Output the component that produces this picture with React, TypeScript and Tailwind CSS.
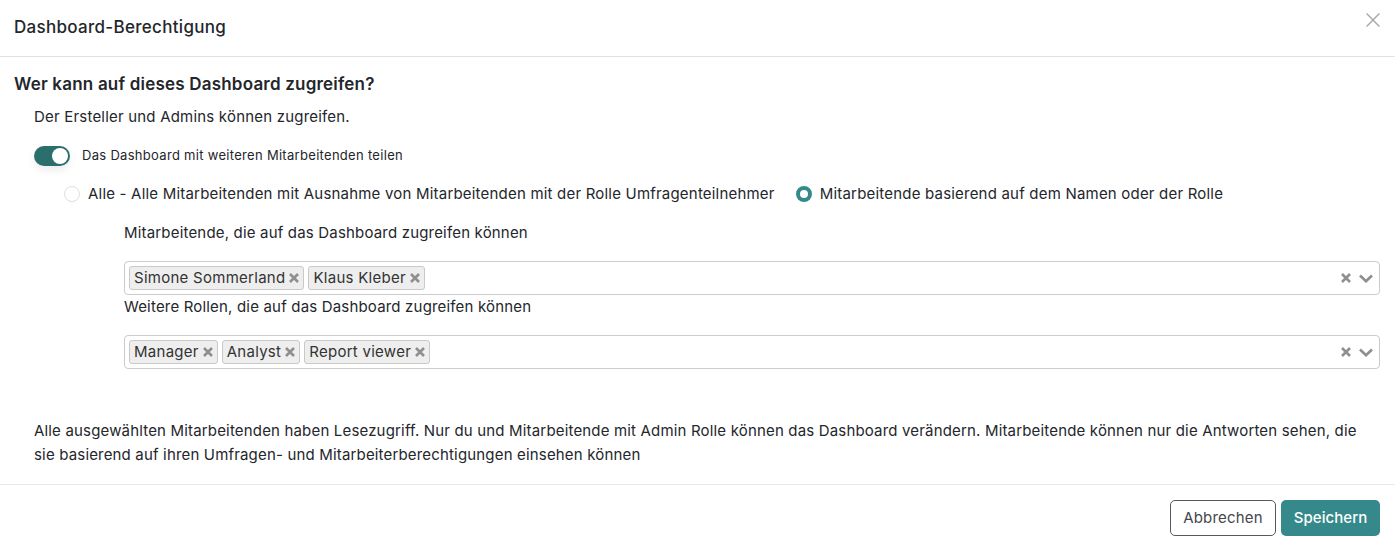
const font = { fontFamily: "Inter, sans-serif" };

function Cross({ size, stroke, className }: { size: number; stroke: number; className: string }) {
  return (
    <svg width={size} height={size} viewBox="0 0 10 10" fill="none" className={className}>
      <path d="M1 1L9 9M9 1L1 9" stroke="currentColor" strokeWidth={stroke} />
    </svg>
  );
}

function Tag({ label }: { label: string }) {
  return (
    <span className="flex h-[24px] items-center gap-[4px] rounded-[3px] border border-[#c9c9c9] bg-[#eeeeee] pl-[4px] pr-[4px] text-[15px] tracking-[0.27px] text-[#333]">
      {label}
      <Cross size={10} stroke={2.6} className="text-[#8f8f8f]" />
    </span>
  );
}

function TagSelect({ tags }: { tags: string[] }) {
  return (
    <div className="flex h-[34px] items-center rounded-[4px] border border-[#cccccc] bg-white pl-[4px] pr-[6px]">
      <div className="flex flex-1 items-center gap-[4px]">
        {tags.map((t) => (
          <Tag key={t} label={t} />
        ))}
      </div>
      <Cross size={10} stroke={2.6} className="text-[#8f8f8f]" />
      <svg width="14" height="9" viewBox="0 0 14 9" fill="none" className="ml-[8px] text-[#8f8f8f]">
        <path d="M1 1.5L7 7.2L13 1.5" stroke="currentColor" strokeWidth="2.7" />
      </svg>
    </div>
  );
}

export default function App() {
  return (
    <div className="h-[551px] w-[1395px] overflow-hidden bg-white text-[15px] tracking-[0.2px] text-[#24262b]" style={font}>
      <div className="relative flex h-[57px] items-center border-b border-[#dfe1e6] pl-[14px]">
        <h1 className="text-[17px] font-medium tracking-[0.3px]">Dashboard-Berechtigung</h1>
        <Cross size={16} stroke={0.9} className="absolute right-[14px] top-[12px] text-[#a8a8a8]" />
      </div>

      <div className="h-[427px] pl-[14px] pr-[15px] pt-[17px]">
        <h2 className="text-[17px] font-semibold leading-[20px] tracking-[0.2px]">Wer kann auf dieses Dashboard zugreifen?</h2>
        <div className="pl-[20px]">
          <p className="mt-[13px] leading-[20px]">Der Ersteller und Admins können zugreifen.</p>
          <div className="mt-[19px] flex h-[20px] items-center">
            <span className="flex h-[20px] w-[36px] items-center justify-end rounded-full bg-[#2a6f6c] pr-[2px] shadow-[0_4px_8px_rgba(0,0,0,0.08)]">
              <span className="h-[16px] w-[16px] rounded-full bg-white" />
            </span>
            <span className="ml-[12px] text-[13px] tracking-[0.3px]">Das Dashboard mit weiteren Mitarbeitenden teilen</span>
          </div>
          <div className="mt-[18px] flex h-[20px] items-center pl-[30px]">
            <span className="h-[16px] w-[16px] rounded-full border border-[#dcdfe4] bg-white" />
            <span className="ml-[8px]">Alle - Alle Mitarbeitenden mit Ausnahme von Mitarbeitenden mit der Rolle Umfragenteilnehmer</span>
            <span className="ml-[21px] h-[16px] w-[16px] rounded-full border-[4px] border-[#35898a] bg-white" />
            <span className="ml-[8px]">Mitarbeitende basierend auf dem Namen oder der Rolle</span>
          </div>
          <div className="pl-[90px]">
            <p className="mt-[19px] leading-[20px] tracking-[0.18px]">Mitarbeitende, die auf das Dashboard zugreifen können</p>
            <div className="mt-[18px]">
              <TagSelect tags={["Simone Sommerland", "Klaus Kleber"]} />
            </div>
            <p className="mt-[2px] leading-[20px] tracking-[0.18px]">Weitere Rollen, die auf das Dashboard zugreifen können</p>
            <div className="mt-[18px]">
              <TagSelect tags={["Manager", "Analyst", "Report viewer"]} />
            </div>
          </div>
          <p className="mt-[50px] pr-[10px] leading-[24px] tracking-[0.17px]">
            Alle ausgewählten Mitarbeitenden haben Lesezugriff. Nur du und Mitarbeitende mit Admin Rolle können das Dashboard verändern. Mitarbeitende können nur die Antworten sehen, die sie basierend auf ihren Umfragen- und Mitarbeiterberechtigungen einsehen können
          </p>
        </div>
      </div>

      <div className="flex h-[67px] items-start justify-end gap-[5px] border-t border-[#e8e9ec] pr-[15px] pt-[15px]">
        <button className="h-[36px] w-[106px] rounded-[5px] border border-[#55585c] bg-white text-[#44474b]">Abbrechen</button>
        <button className="h-[36px] w-[99px] rounded-[5px] bg-[#35898a] font-medium tracking-[0.05px] text-white">Speichern</button>
      </div>
    </div>
  );
}
